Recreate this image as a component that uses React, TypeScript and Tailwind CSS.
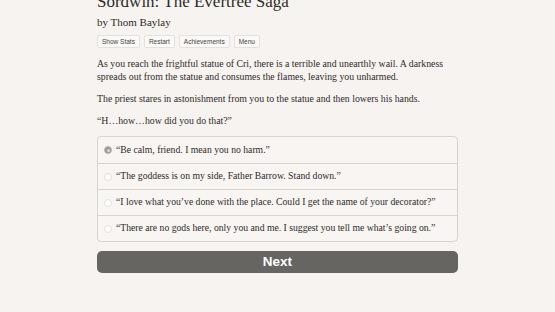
import React from "react";

const choices = [
  "\u201CBe calm, friend. I mean you no harm.\u201D",
  "\u201CThe goddess is on my side, Father Barrow. Stand down.\u201D",
  "\u201CI love what you\u2019ve done with the place. Could I get the name of your decorator?\u201D",
  "\u201CThere are no gods here, only you and me. I suggest you tell me what\u2019s going on.\u201D",
];

export default function App() {
  const serif = { fontFamily: '"Liberation Serif", "DejaVu Serif", serif' };
  return (
    <div className="w-[555px] h-[312px] overflow-hidden bg-[#f7f3f0] text-[#2e2b29]" style={serif}>
      <div className="ml-[97px] w-[361px] -mt-[8px] flex flex-col">
        <h1 className="text-[17px] leading-[20px]">Sordwin: The Evertree Saga</h1>
        <div className="mt-[3px] text-[11px] leading-[14px]">by Thom Baylay</div>
        <div className="mt-[6px] flex gap-[4px] text-[6.5px] leading-[8px]" style={{ fontFamily: '"Liberation Sans", sans-serif' }}>
          {["Show Stats", "Restart", "Achievements", "Menu"].map((b) => (
            <span key={b} className="px-[4px] py-[1.5px] bg-[#fbf9f7] border border-[#e6e1dc] rounded-[2px] text-[#444]">{b}</span>
          ))}
        </div>
        <p className="mt-[9px] text-[9.8px] leading-[13px]">
          As you reach the frightful statue of Cri, there is a terrible and unearthly wail. A darkness spreads out from the statue and consumes the flames, leaving you unharmed.
        </p>
        <p className="mt-[9px] text-[9.8px] leading-[13px]">
          The priest stares in astonishment from you to the statue and then lowers his hands.
        </p>
        <p className="mt-[9px] text-[9.8px] leading-[13px]">{"\u201CH\u2026how\u2026how did you do that?\u201D"}</p>
        <div className="mt-[9px] border border-[#d9d4cf] rounded-[4px] bg-[#f8f5f2] flex flex-col">
          {choices.map((c, i) => (
            <div key={i} className={`h-[26px] flex items-center pl-[6px] gap-[4px] text-[9.7px] ${i > 0 ? "border-t border-[#d9d4cf]" : ""}`}>
              {i === 0 ? (
                <span className="w-[8px] h-[8px] rounded-full bg-[#9a9794] border border-[#bdb9b5] flex items-center justify-center">
                  <span className="w-[3px] h-[3px] rounded-full bg-[#dcd8d4]" />
                </span>
              ) : (
                <span className="w-[8px] h-[8px] rounded-full bg-white border border-[#e4e0dc]" />
              )}
              <span>{c}</span>
            </div>
          ))}
        </div>
        <button className="mt-[9px] h-[22px] rounded-[5px] bg-[#676562] text-white font-bold text-[13.5px] flex items-center justify-center" style={{ fontFamily: '"Liberation Sans", Arial, sans-serif' }}>
          Next
        </button>
      </div>
    </div>
  );
}
